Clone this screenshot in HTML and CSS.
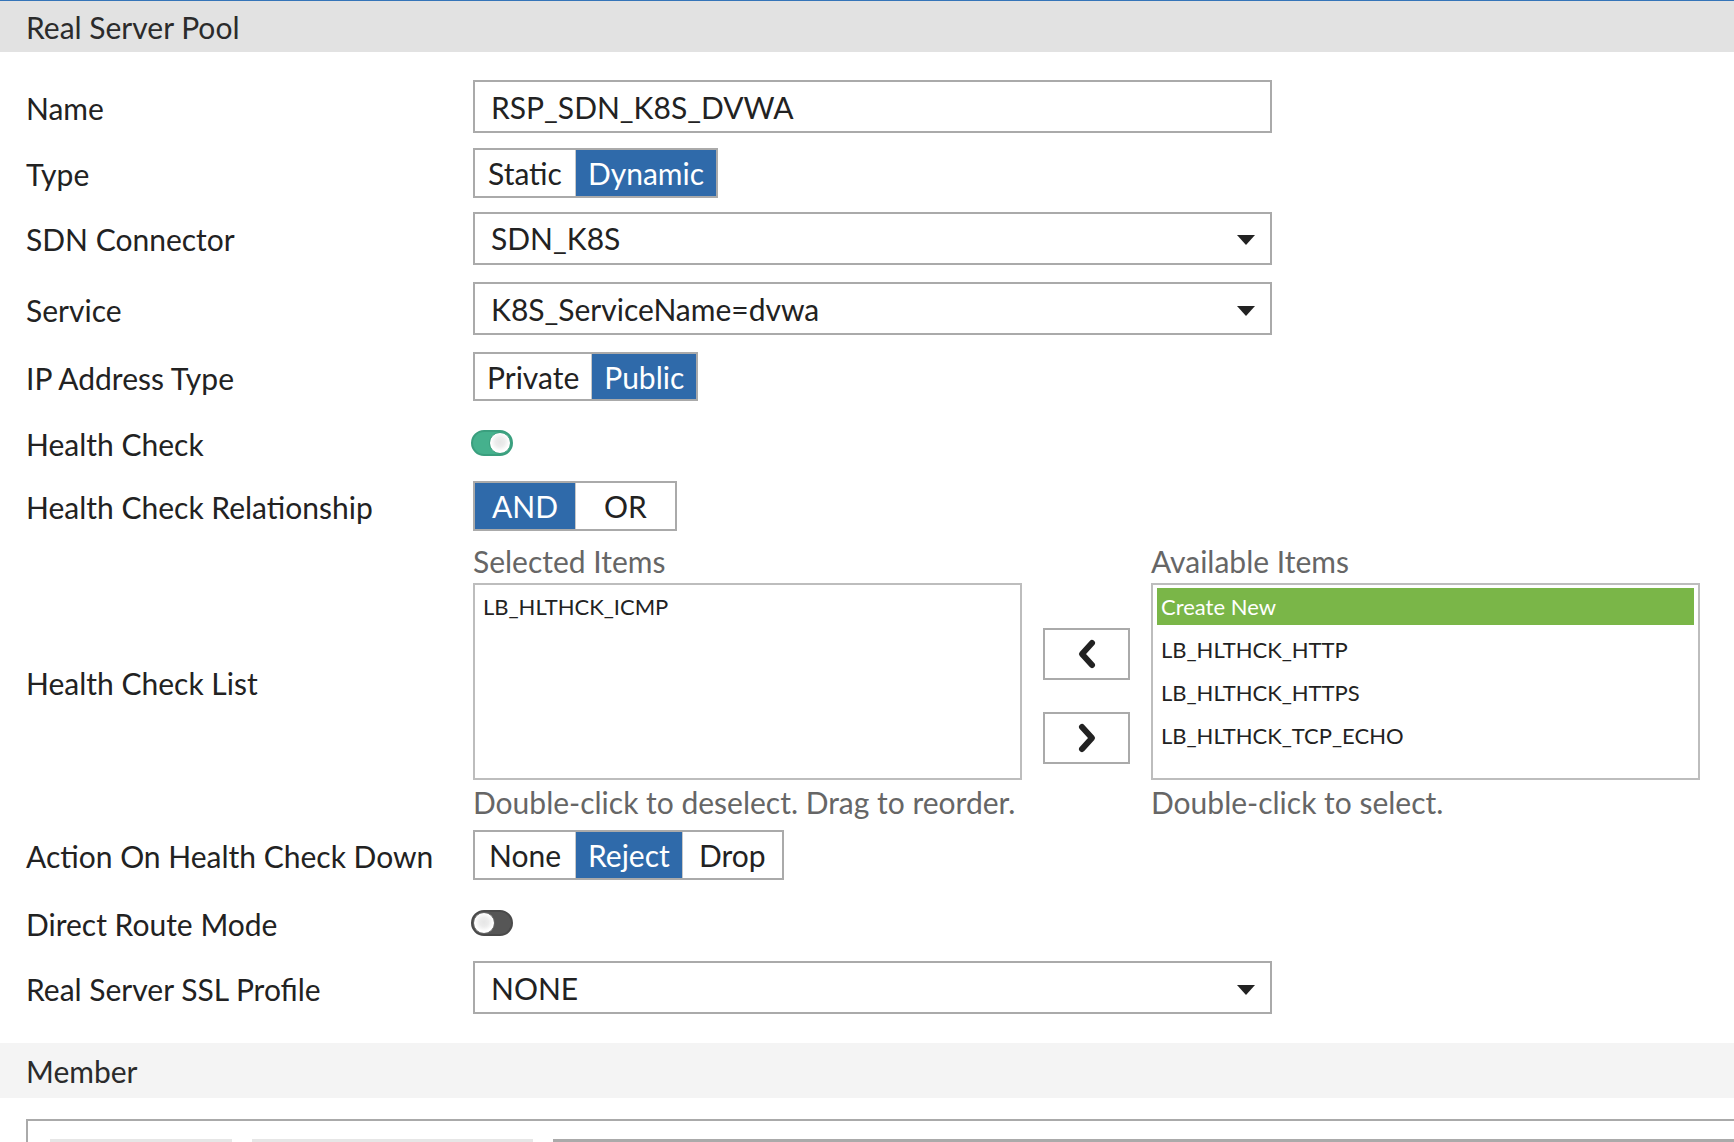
FILE: index.html
```html
<!DOCTYPE html>
<html lang="en">
<head>
<meta charset="utf-8">
<title>Real Server Pool</title>
<link rel="stylesheet" href="styles.css">
</head>
<body>
<div class="section-head">Real Server Pool</div>
<div class="form">
  <div class="row r-name">
    <div class="lbl">Name</div>
    <div class="input">RSP_SDN_K8S_DVWA</div>
  </div>
  <div class="row r-type">
    <div class="lbl">Type</div>
    <div class="seg"><span>Static</span><span class="on">Dynamic</span></div>
  </div>
  <div class="row r-sdn">
    <div class="lbl">SDN Connector</div>
    <div class="input select"><span>SDN_K8S</span><svg class="caret" width="18" height="10" viewBox="0 0 18 10"><path d="M0 0H18L9 10Z" fill="#222"/></svg></div>
  </div>
  <div class="row r-svc">
    <div class="lbl">Service</div>
    <div class="input select"><span>K8S_ServiceName=dvwa</span><svg class="caret" width="18" height="10" viewBox="0 0 18 10"><path d="M0 0H18L9 10Z" fill="#222"/></svg></div>
  </div>
  <div class="row r-ip">
    <div class="lbl">IP Address Type</div>
    <div class="seg seg-sm"><span>Private</span><span class="on">Public</span></div>
  </div>
  <div class="row r-hc">
    <div class="lbl">Health Check</div>
    <div class="toggle on"><div class="knob"></div></div>
  </div>
  <div class="row r-hcr">
    <div class="lbl">Health Check Relationship</div>
    <div class="seg"><span class="on">AND</span><span>OR</span></div>
  </div>
  <div class="row r-list">
    <div class="lbl">Health Check List</div>
    <div class="dual">
      <div class="col">
        <div class="col-title">Selected Items</div>
        <div class="listbox">
          <div class="item">LB_HLTHCK_ICMP</div>
        </div>
        <div class="hint">Double-click to deselect. Drag to reorder.</div>
      </div>
      <div class="arrows">
        <div class="arrow-btn"><svg width="22" height="32" viewBox="0 0 22 32"><polyline points="16,5 6,16 16,27" fill="none" stroke="#222" stroke-width="6" stroke-linecap="round" stroke-linejoin="round"/></svg></div>
        <div class="arrow-btn"><svg width="22" height="32" viewBox="0 0 22 32"><polyline points="6,5 16,16 6,27" fill="none" stroke="#222" stroke-width="6" stroke-linecap="round" stroke-linejoin="round"/></svg></div>
      </div>
      <div class="col">
        <div class="col-title">Available Items</div>
        <div class="listbox">
          <div class="item create">Create New</div>
          <div class="item">LB_HLTHCK_HTTP</div>
          <div class="item">LB_HLTHCK_HTTPS</div>
          <div class="item">LB_HLTHCK_TCP_ECHO</div>
        </div>
        <div class="hint">Double-click to select.</div>
      </div>
    </div>
  </div>
  <div class="row r-action">
    <div class="lbl">Action On Health Check Down</div>
    <div class="seg"><span>None</span><span class="on">Reject</span><span>Drop</span></div>
  </div>
  <div class="row r-drm">
    <div class="lbl">Direct Route Mode</div>
    <div class="toggle off"><div class="knob"></div></div>
  </div>
  <div class="row r-ssl">
    <div class="lbl">Real Server SSL Profile</div>
    <div class="input select"><span>NONE</span><svg class="caret" width="18" height="10" viewBox="0 0 18 10"><path d="M0 0H18L9 10Z" fill="#222"/></svg></div>
  </div>
</div>
<div class="section-head member">Member</div>
<div class="member-box">
  <div class="bar bar-a"></div>
  <div class="bar bar-b"></div>
  <div class="bar bar-c"></div>
</div>
</body>
</html>
```

FILE: styles.css
```css
html, body {
  margin: 0;
  padding: 0;
  background: #fff;
  overflow: hidden;
}
body {
  font-family: Lato, "Noto Sans", "Liberation Sans", sans-serif;
  color: #222;
  font-size: 30px;
}
.section-head {
  height: 51px;
  border-top: 1px solid #3474b8;
  background: #e2e2e2;
  display: flex;
  align-items: center;
  padding-left: 26px;
  font-size: 30px;
  color: #2b2b2b;
}
.section-head.member {
  margin-top: 25px;
  height: 55px;
  border-top: none;
  background: #f4f4f4;
}
.form {
  padding: 21px 0 0 26px;
}
.row {
  display: flex;
  align-items: center;
}
.lbl {
  width: 447px;
  flex: none;
  font-size: 30px;
  color: #222;
  padding-top: 2px;
}
.r-name { height: 67px; }
.r-type { height: 65px; }
.r-sdn { height: 66px; }
.r-svc { height: 75px; }
.r-ip { height: 61px; }
.r-hc { height: 71px; }
.r-hcr { height: 56px; }
.r-list { padding: 10px 0 3px; }
.r-action { height: 66px; }
.r-drm { height: 69px; }
.r-ssl { height: 61px; }

.input {
  width: 799px;
  height: 53px;
  box-sizing: border-box;
  border: 2px solid #aaa;
  padding: 0 15px 0 16px;
  display: flex;
  align-items: center;
  font-size: 30px;
  color: #222;
}
.select {
  justify-content: space-between;
}
.caret {
  margin-top: 4px;
}

.seg {
  display: flex;
  height: 50px;
  box-sizing: border-box;
  border: 2px solid #aaa;
}
.seg-sm { height: 49px; }
.seg span {
  min-width: 100px;
  box-sizing: border-box;
  padding: 0 12px;
  display: flex;
  align-items: center;
  justify-content: center;
  font-size: 30px;
  color: #222;
  border-left: 1px solid #c8c8c8;
}
.seg span:first-child { border-left: none; }
.seg span.on {
  background: #2f6aaa;
  color: #fff;
}

.toggle {
  position: relative;
  width: 42px;
  height: 26px;
  box-sizing: border-box;
  border-radius: 13px;
  margin-left: -2px;
}
.toggle.on {
  background: #45b18d;
  border: 2px solid #3a9f7e;
}
.toggle.off {
  background: #565656;
  border: 2px solid #4a4a4a;
}
.knob {
  position: absolute;
  top: 0;
  width: 22px;
  height: 22px;
  box-sizing: border-box;
  border-radius: 50%;
  background: radial-gradient(circle at 50% 45%, #e6e6e6 0, #ececec 30%, #fff 62%);
}
.toggle.on .knob { right: 0; border: 1px solid #3a9f7e; }
.toggle.off .knob { left: 0; border: 1px solid #666; }

.dual {
  display: flex;
  gap: 21px;
}
.col {
  width: 549px;
  display: flex;
  flex-direction: column;
}
.col-title {
  line-height: 34px;
  font-size: 30px;
  color: #666;
}
.listbox {
  margin-top: 5px;
  height: 197px;
  box-sizing: border-box;
  border: 2px solid #bdbdbd;
  padding: 3px 4px;
}
.item {
  height: 37px;
  margin-bottom: 6px;
  padding-left: 4px;
  display: flex;
  align-items: center;
  font-size: 22px;
  color: #222;
}
.item.create {
  background: #7ab648;
  color: #fff;
}
.hint {
  margin-top: 5px;
  line-height: 34px;
  font-size: 30px;
  color: #666;
}
.arrows {
  width: 87px;
  padding-top: 84px;
  display: flex;
  flex-direction: column;
  gap: 32px;
}
.arrow-btn {
  width: 87px;
  height: 52px;
  box-sizing: border-box;
  border: 2px solid #aaa;
  display: flex;
  align-items: center;
  justify-content: center;
}

.member-box {
  margin: 21px 0 0 26px;
  height: 120px;
  box-sizing: border-box;
  border: 2px solid #aaa;
  border-right: none;
  padding: 18px 0 0 22px;
  display: flex;
  gap: 20px;
}
.bar {
  height: 30px;
  box-sizing: border-box;
}
.bar-a { width: 182px; border-top: 3px solid #e6e6e6; }
.bar-b { width: 281px; border-top: 3px solid #e6e6e6; }
.bar-c { flex: 1; border-top: 3px solid #aaa; }
```
